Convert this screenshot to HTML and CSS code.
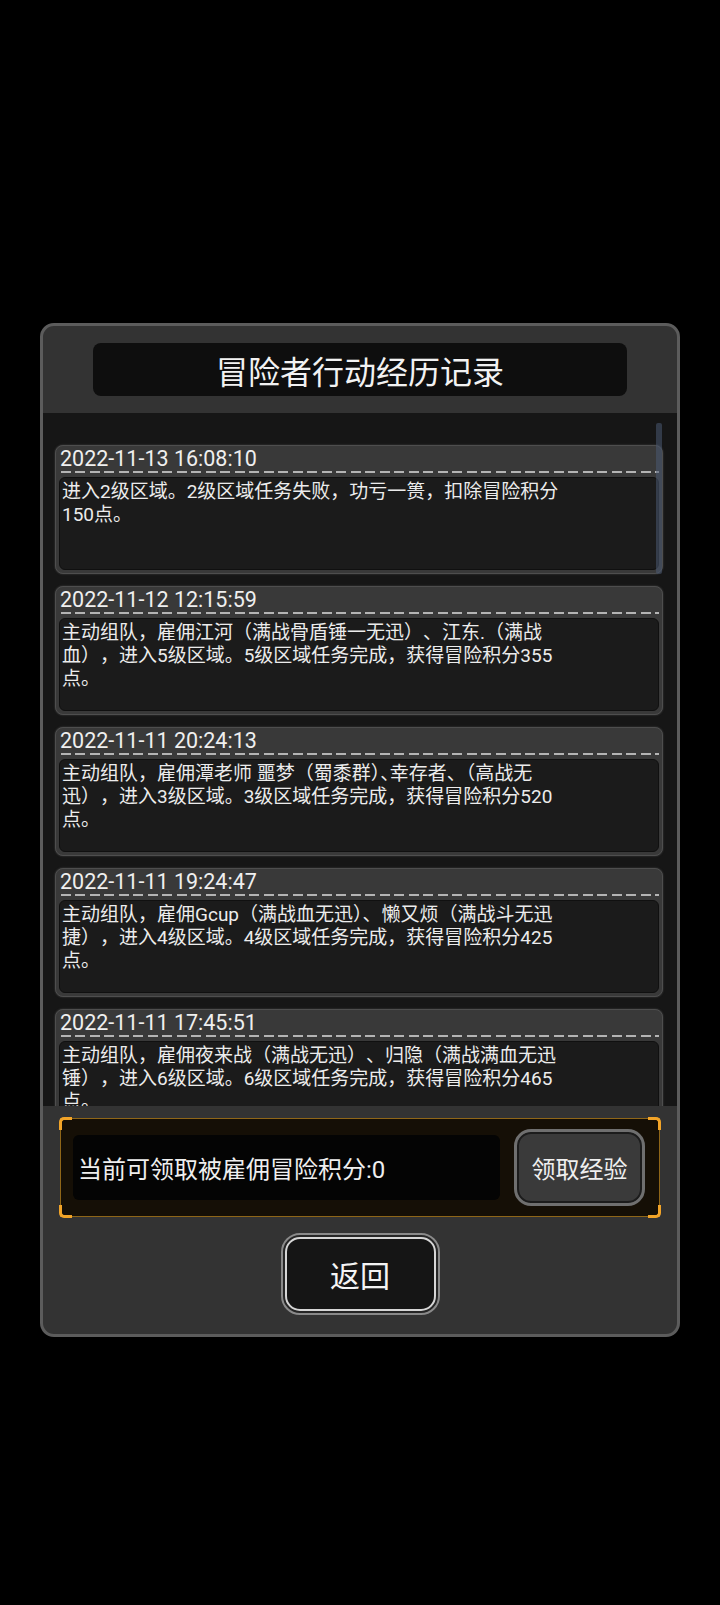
FILE: index.html
```html
<!DOCTYPE html>
<html lang="zh-CN">
<head>
<meta charset="utf-8">
<title>冒险者行动经历记录</title>
<link rel="stylesheet" href="styles.css">
</head>
<body>
<div class="panel">
  <div class="title">冒险者行动经历记录</div>
  <div class="list">
    <div class="scrollbar"></div>
    <div class="card">
      <div class="date">2022-11-13 16:08:10</div>
      <div class="dash"></div>
      <div class="body">进入2级区域。2级区域任务失败，功亏一篑，扣除冒险积分<br>150点。</div>
    </div>
    <div class="card">
      <div class="date">2022-11-12 12:15:59</div>
      <div class="dash"></div>
      <div class="body">主动组队，雇佣江河（满战骨盾锤一无迅）、江东.（满战<br>血），进入5级区域。5级区域任务完成，获得冒险积分355<br>点。</div>
    </div>
    <div class="card">
      <div class="date">2022-11-11 20:24:13</div>
      <div class="dash"></div>
      <div class="body">主动组队，雇佣潭老师 噩梦（蜀黍群<span class="half">）</span><span class="half">、</span>幸存者<span class="half">、</span>（高战无<br>迅），进入3级区域。3级区域任务完成，获得冒险积分520<br>点。</div>
    </div>
    <div class="card">
      <div class="date">2022-11-11 19:24:47</div>
      <div class="dash"></div>
      <div class="body">主动组队，雇佣Gcup（满战血无迅<span class="half">）</span>、懒又烦（满战斗无迅<br>捷），进入4级区域。4级区域任务完成，获得冒险积分425<br>点。</div>
    </div>
    <div class="card">
      <div class="date">2022-11-11 17:45:51</div>
      <div class="dash"></div>
      <div class="body">主动组队，雇佣夜来战（满战无迅）、归隐（满战满血无迅<br>锤），进入6级区域。6级区域任务完成，获得冒险积分465<br>点。</div>
    </div>
  </div>
  <div class="claim">
    <span class="corner tl"></span><span class="corner tr"></span><span class="corner bl"></span><span class="corner br"></span>
    <div class="points">当前可领取被雇佣冒险积分:0</div>
    <div class="claim-btn">领取经验</div>
  </div>
  <div class="back-btn"><div class="back-inner">返回</div></div>
</div>
</body>
</html>
```

FILE: styles.css
```css
* { box-sizing: border-box; }
html, body { margin: 0; padding: 0; background: #000; }
body {
  width: 720px;
  height: 1605px;
  font-family: Roboto, "Noto Sans CJK SC", sans-serif;
  color: #ededed;
  overflow: hidden;
  text-spacing-trim: space-all;
}
.panel {
  width: 640px;
  height: 1014px;
  margin: 323px 0 0 40px;
  border: 3px solid #5c5c5c;
  border-radius: 14px;
  background: #333333;
  display: flex;
  flex-direction: column;
}
.title {
  margin: 17px 50px 0;
  height: 53px;
  background: #0e0e0e;
  border-radius: 8px;
  display: flex;
  align-items: center;
  justify-content: center;
  font-size: 32px;
  color: #f2f2f2;
}
.list {
  position: relative;
  margin-top: 17px;
  height: 693px;
  overflow: hidden;
  background: #161616;
  padding: 32px 14px 0 12px;
  display: flex;
  flex-direction: column;
  gap: 12px;
}
.scrollbar {
  position: absolute;
  right: 15px;
  top: 10px;
  width: 6px;
  height: 151px;
  background: rgba(75, 90, 115, 0.55);
  border-radius: 2px;
  z-index: 2;
}
.card {
  flex: none;
  height: 129px;
  border: 1px solid #4e4e4e;
  border-radius: 8px;
  background: #393939;
  box-shadow: 0 0 2px rgba(120,120,120,0.5);
  padding: 0 3px 3px 3px;
  display: flex;
  flex-direction: column;
}
.date {
  height: 25px;
  line-height: 25px;
  font-size: 21.5px;
  padding-left: 1px;
  color: #efefef;
}
.dash {
  height: 2px;
  margin: 0 0 4px 2px;
  background: repeating-linear-gradient(90deg, #b4b4b4 0 10px, transparent 10px 14.5px);
}
.body {
  flex: 1;
  background: #1b1b1b;
  border: 1px solid #101010;
  border-radius: 6px;
  padding: 2px 2px;
  font-size: 19px;
  line-height: 23px;
  color: #ececec;
  white-space: nowrap;
  overflow: hidden;
}
.half {
  letter-spacing: -9.5px;
}
.claim {
  position: relative;
  margin: 12px 17px 0;
  height: 99px;
  border: 1px solid #8f6618;
  border-radius: 4px;
  background: #150f06;
  display: flex;
  align-items: center;
  padding: 0 14px 0 12px;
  gap: 14px;
}
.corner {
  position: absolute;
  width: 13px;
  height: 13px;
  border-color: #f2a428;
  border-style: solid;
  border-width: 0;
}
.corner.tl { left: -2px; top: -2px; border-left-width: 3px; border-top-width: 3px; border-top-left-radius: 5px; }
.corner.tr { right: -2px; top: -2px; border-right-width: 3px; border-top-width: 3px; border-top-right-radius: 5px; }
.corner.bl { left: -2px; bottom: -2px; border-left-width: 3px; border-bottom-width: 3px; border-bottom-left-radius: 5px; }
.corner.br { right: -2px; bottom: -2px; border-right-width: 3px; border-bottom-width: 3px; border-bottom-right-radius: 5px; }
.points {
  flex: 1;
  height: 65px;
  background: #040404;
  border-radius: 6px;
  display: flex;
  align-items: center;
  padding-left: 5px;
  font-size: 24px;
  color: #efefef;
}
.claim-btn {
  width: 131px;
  height: 77px;
  border: 3px solid #6f6f6f;
  border-radius: 17px;
  background: #3a3a3a;
  box-shadow: inset 0 0 0 2px #1c1c1c;
  display: flex;
  align-items: center;
  justify-content: center;
  font-size: 24px;
  color: #efefef;
}
.back-btn {
  margin: 16px auto 0;
  width: 159px;
  height: 82px;
  border: 2px solid #8a8a8a;
  border-radius: 19px;
  background: #262626;
  padding: 2px;
}
.back-inner {
  width: 100%;
  height: 100%;
  border: 2px solid #d6d6d6;
  border-radius: 15px;
  background: #151515;
  display: flex;
  align-items: center;
  justify-content: center;
  font-size: 30px;
  color: #f4f4f4;
}
```
